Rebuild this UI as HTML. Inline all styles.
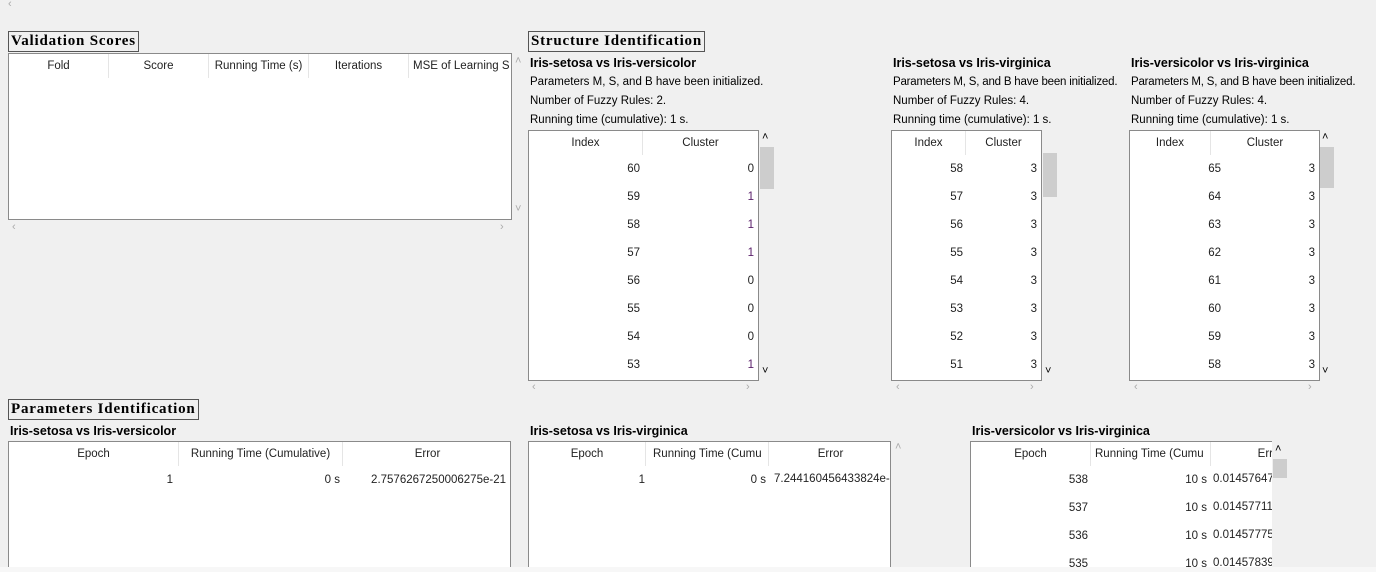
<!DOCTYPE html>
<html><head><meta charset="utf-8"><style>
*{margin:0;padding:0;box-sizing:border-box}
body{width:1376px;height:572px;background:#f0f0f0;position:relative;overflow:hidden;font-family:"Liberation Sans",sans-serif;font-size:11.5px;color:#000}
.a{position:absolute;white-space:nowrap}
.ttl{position:absolute;border:1px solid #555;font-family:"Liberation Serif",serif;font-weight:bold;font-size:15px;letter-spacing:.8px;padding:0 2px;line-height:19px;height:21px;background:#f0f0f0}
.box{position:absolute;background:#fff;border:1px solid #8a8a8a;overflow:hidden}
.h{position:absolute;top:0;height:24px;line-height:24px;text-align:center;border-right:1px solid #e5e5e5;color:#222;white-space:nowrap;overflow:hidden}
.c{position:absolute;text-align:right;color:#222;height:14px;line-height:14px;white-space:nowrap;overflow:hidden}
.b{font-weight:bold;font-size:12.5px}
.g{color:#aaa;font-size:11px}
.th{position:absolute;background:#cdcdcd}
.p{color:#5a1f6a}
</style></head><body>
<div class="a g" style="left:8px;top:-2px">‹</div>

<div class="ttl" style="left:8px;top:31px">Validation Scores</div>
<div class="box" style="left:8px;top:53px;width:504px;height:167px">
<div class="h" style="left:0;width:100px">Fold</div>
<div class="h" style="left:100px;width:100px">Score</div>
<div class="h" style="left:200px;width:100px">Running Time (s)</div>
<div class="h" style="left:300px;width:100px">Iterations</div>
<div class="h" style="left:400px;width:104px;text-align:left;padding-left:4px">MSE of Learning S</div>
</div>
<div class="a g" style="left:12px;top:221px">‹</div><div class="a g" style="left:500px;top:221px">›</div>
<div class="a g" style="left:515px;top:55px">˄</div><div class="a g" style="left:515px;top:203px">˅</div>

<div class="ttl" style="left:528px;top:31px">Structure Identification</div>
<div class="a b" style="left:530px;top:56px">Iris-setosa vs Iris-versicolor</div>
<div class="a" style="left:530px;top:76px">Parameters M, S, and B have been initialized.</div>
<div class="a" style="left:530px;top:95px">Number of Fuzzy Rules: 2.</div>
<div class="a" style="left:530px;top:114px">Running time (cumulative): 1 s.</div>
<div class="box" style="left:528px;top:130px;width:231px;height:251px">
<div class="h" style="left:0;width:114px">Index</div><div class="h" style="left:114px;width:115px;border:0">Cluster</div>
<div class="c" style="left:0;width:111px;top:31px">60</div><div class="c" style="left:114px;width:111px;top:31px">0</div>
<div class="c" style="left:0;width:111px;top:59px">59</div><div class="c p" style="left:114px;width:111px;top:59px">1</div>
<div class="c" style="left:0;width:111px;top:87px">58</div><div class="c p" style="left:114px;width:111px;top:87px">1</div>
<div class="c" style="left:0;width:111px;top:115px">57</div><div class="c p" style="left:114px;width:111px;top:115px">1</div>
<div class="c" style="left:0;width:111px;top:143px">56</div><div class="c" style="left:114px;width:111px;top:143px">0</div>
<div class="c" style="left:0;width:111px;top:171px">55</div><div class="c" style="left:114px;width:111px;top:171px">0</div>
<div class="c" style="left:0;width:111px;top:199px">54</div><div class="c" style="left:114px;width:111px;top:199px">0</div>
<div class="c" style="left:0;width:111px;top:227px">53</div><div class="c p" style="left:114px;width:111px;top:227px">1</div>
</div>
<div class="th" style="left:760px;top:147px;width:14px;height:42px"></div>
<div class="a" style="left:762px;top:131px;font-size:11px">˄</div><div class="a" style="left:762px;top:365px;font-size:11px">˅</div>
<div class="a g" style="left:532px;top:381px">‹</div><div class="a g" style="left:746px;top:381px">›</div>

<div class="a b" style="left:893px;top:56px">Iris-setosa vs Iris-virginica</div>
<div class="a" style="left:893px;top:76px;letter-spacing:-0.2px">Parameters M, S, and B have been initialized.</div>
<div class="a" style="left:893px;top:95px">Number of Fuzzy Rules: 4.</div>
<div class="a" style="left:893px;top:114px">Running time (cumulative): 1 s.</div>
<div class="box" style="left:891px;top:130px;width:151px;height:251px">
<div class="h" style="left:0;width:74px">Index</div><div class="h" style="left:74px;width:75px;border:0">Cluster</div>
<div class="c" style="left:0;width:71px;top:31px">58</div><div class="c" style="left:74px;width:71px;top:31px">3</div>
<div class="c" style="left:0;width:71px;top:59px">57</div><div class="c" style="left:74px;width:71px;top:59px">3</div>
<div class="c" style="left:0;width:71px;top:87px">56</div><div class="c" style="left:74px;width:71px;top:87px">3</div>
<div class="c" style="left:0;width:71px;top:115px">55</div><div class="c" style="left:74px;width:71px;top:115px">3</div>
<div class="c" style="left:0;width:71px;top:143px">54</div><div class="c" style="left:74px;width:71px;top:143px">3</div>
<div class="c" style="left:0;width:71px;top:171px">53</div><div class="c" style="left:74px;width:71px;top:171px">3</div>
<div class="c" style="left:0;width:71px;top:199px">52</div><div class="c" style="left:74px;width:71px;top:199px">3</div>
<div class="c" style="left:0;width:71px;top:227px">51</div><div class="c" style="left:74px;width:71px;top:227px">3</div>
</div>
<div class="th" style="left:1043px;top:153px;width:14px;height:44px"></div>
<div class="a" style="left:1045px;top:365px;font-size:11px">˅</div>
<div class="a g" style="left:896px;top:381px">‹</div><div class="a g" style="left:1030px;top:381px">›</div>

<div class="a b" style="left:1131px;top:56px">Iris-versicolor vs Iris-virginica</div>
<div class="a" style="left:1131px;top:76px;letter-spacing:-0.2px">Parameters M, S, and B have been initialized.</div>
<div class="a" style="left:1131px;top:95px">Number of Fuzzy Rules: 4.</div>
<div class="a" style="left:1131px;top:114px">Running time (cumulative): 1 s.</div>
<div class="box" style="left:1129px;top:130px;width:191px;height:251px">
<div class="h" style="left:0;width:81px">Index</div><div class="h" style="left:81px;width:108px;border:0">Cluster</div>
<div class="c" style="left:0;width:91px;top:31px">65</div><div class="c" style="left:81px;width:104px;top:31px">3</div>
<div class="c" style="left:0;width:91px;top:59px">64</div><div class="c" style="left:81px;width:104px;top:59px">3</div>
<div class="c" style="left:0;width:91px;top:87px">63</div><div class="c" style="left:81px;width:104px;top:87px">3</div>
<div class="c" style="left:0;width:91px;top:115px">62</div><div class="c" style="left:81px;width:104px;top:115px">3</div>
<div class="c" style="left:0;width:91px;top:143px">61</div><div class="c" style="left:81px;width:104px;top:143px">3</div>
<div class="c" style="left:0;width:91px;top:171px">60</div><div class="c" style="left:81px;width:104px;top:171px">3</div>
<div class="c" style="left:0;width:91px;top:199px">59</div><div class="c" style="left:81px;width:104px;top:199px">3</div>
<div class="c" style="left:0;width:91px;top:227px">58</div><div class="c" style="left:81px;width:104px;top:227px">3</div>
</div>
<div class="th" style="left:1320px;top:147px;width:14px;height:41px"></div>
<div class="a" style="left:1322px;top:131px;font-size:11px">˄</div><div class="a" style="left:1322px;top:365px;font-size:11px">˅</div>
<div class="a g" style="left:1134px;top:381px">‹</div><div class="a g" style="left:1308px;top:381px">›</div>

<div class="ttl" style="left:8px;top:399px">Parameters Identification</div>
<div class="a b" style="left:10px;top:424px">Iris-setosa vs Iris-versicolor</div>
<div class="box" style="left:8px;top:441px;width:503px;height:130px">
<div class="h" style="left:0;width:170px">Epoch</div><div class="h" style="left:170px;width:164px">Running Time (Cumulative)</div><div class="h" style="left:334px;width:169px;border:0">Error</div>
<div class="c" style="left:0;width:164px;top:31px">1</div><div class="c" style="left:170px;width:161px;top:31px">0 s</div><div class="c" style="left:334px;width:163px;top:31px">2.7576267250006275e-21</div>
</div>
<div class="a b" style="left:530px;top:424px">Iris-setosa vs Iris-virginica</div>
<div class="box" style="left:528px;top:441px;width:363px;height:130px">
<div class="h" style="left:0;width:117px">Epoch</div><div class="h" style="left:117px;width:123px;text-align:left;padding-left:7px">Running Time (Cumu</div><div class="h" style="left:240px;width:123px;border:0">Error</div>
<div class="c" style="left:0;width:116px;top:31px">1</div><div class="c" style="left:117px;width:120px;top:31px">0 s</div><div class="a" style="left:245px;top:31px;color:#222">7.244160456433824e-(</div>
</div>
<div class="a g" style="left:895px;top:441px">˄</div>
<div class="a b" style="left:972px;top:424px">Iris-versicolor vs Iris-virginica</div>
<div class="box" style="left:970px;top:441px;width:302px;height:130px;border-right:0">
<div class="h" style="left:0;width:120px">Epoch</div><div class="h" style="left:120px;width:120px;text-align:left;padding-left:4px">Running Time (Cumu</div><div class="h" style="left:240px;width:62px;border:0;text-align:right">Err</div>
<div class="c" style="left:0;width:117px;top:31px">538</div><div class="c" style="left:120px;width:116px;top:31px">10 s</div><div class="a" style="left:242px;top:31px;color:#222">0.01457647</div>
<div class="c" style="left:0;width:117px;top:59px">537</div><div class="c" style="left:120px;width:116px;top:59px">10 s</div><div class="a" style="left:242px;top:59px;color:#222">0.01457711</div>
<div class="c" style="left:0;width:117px;top:87px">536</div><div class="c" style="left:120px;width:116px;top:87px">10 s</div><div class="a" style="left:242px;top:87px;color:#222">0.01457775</div>
<div class="c" style="left:0;width:117px;top:115px">535</div><div class="c" style="left:120px;width:116px;top:115px">10 s</div><div class="a" style="left:242px;top:115px;color:#222">0.01457839</div>
</div>
<div class="th" style="left:1273px;top:459px;width:14px;height:19px"></div>
<div class="a" style="left:1275px;top:443px;font-size:11px">˄</div>
<div style="position:absolute;left:0;top:567px;width:1376px;height:5px;background:#f7f7f7"></div>
</body></html>
